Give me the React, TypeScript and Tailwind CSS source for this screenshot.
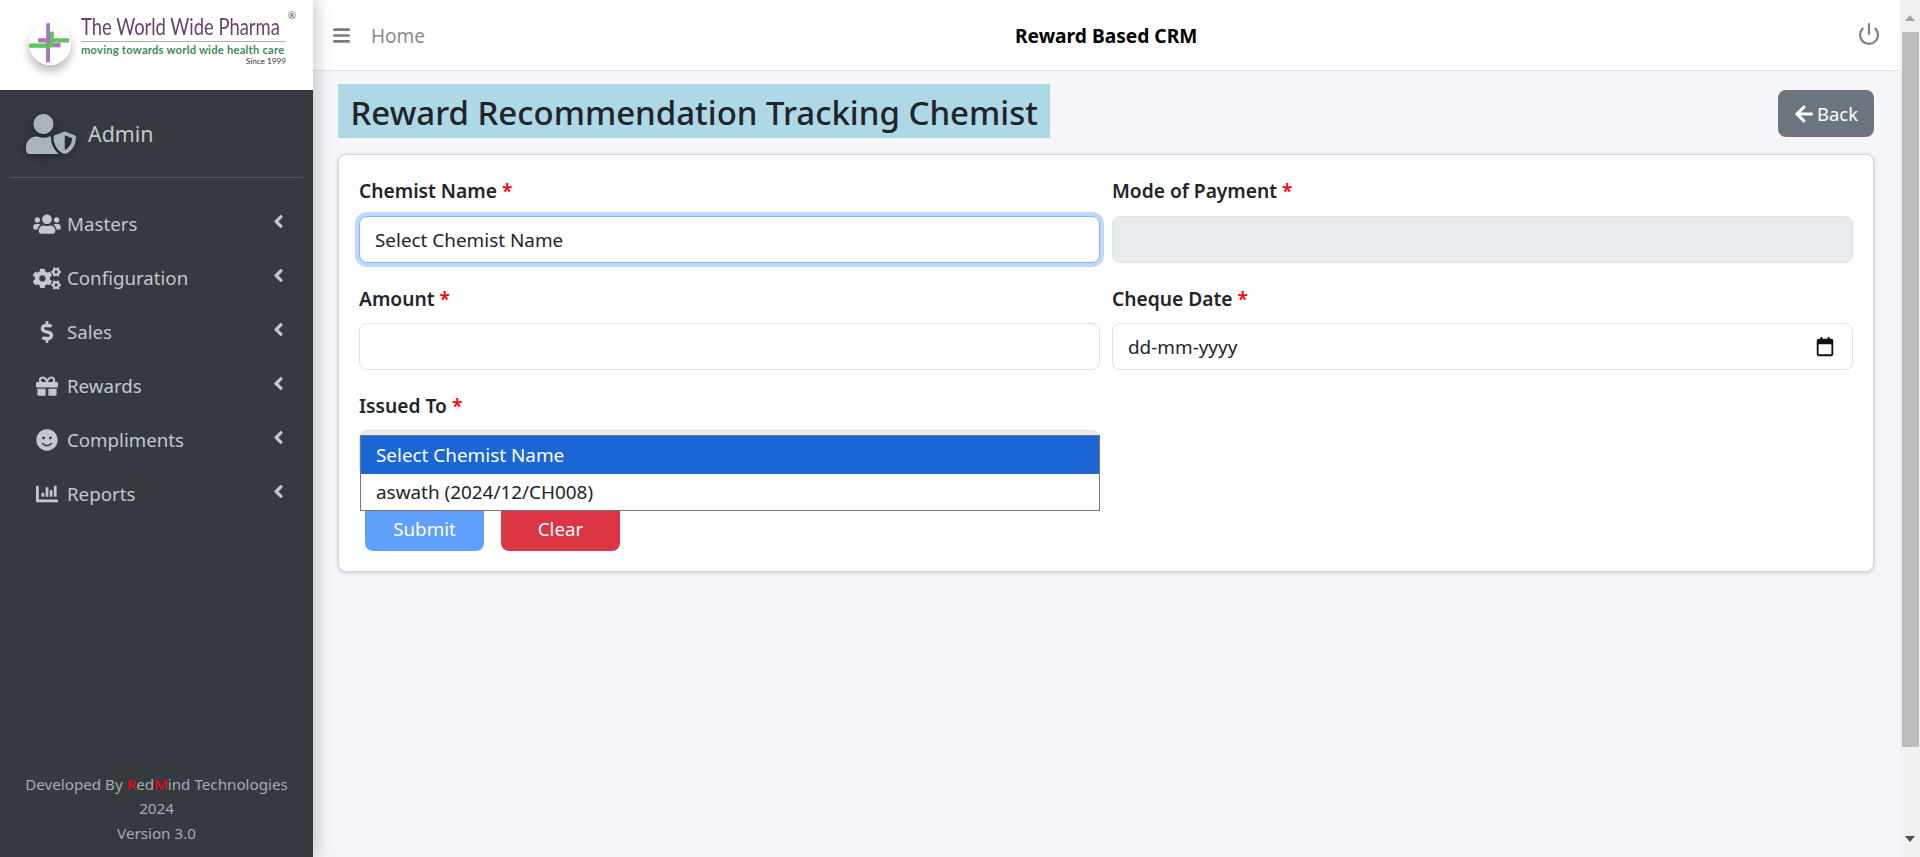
import { FaUsers, FaCogs, FaDollarSign, FaGift, FaSmile, FaChartBar, FaAngleLeft, FaUserShield, FaBars, FaArrowLeft } from "react-icons/fa";
import { Power } from "lucide-react";

const menu = [
  { label: "Masters", icon: <FaUsers className="w-[28px] h-[22px]" /> },
  { label: "Configuration", icon: <FaCogs className="w-[28px] h-[23px]" /> },
  { label: "Sales", icon: <FaDollarSign className="w-[22px] h-[22px]" /> },
  { label: "Rewards", icon: <FaGift className="w-[22px] h-[22px]" /> },
  { label: "Compliments", icon: <FaSmile className="w-[22px] h-[22px]" /> },
  { label: "Reports", icon: <FaChartBar className="w-[22px] h-[22px]" /> },
];

function Logo() {
  return (
    <div className="h-[91px] bg-white flex items-start border-b border-[#2f343a]">
      <svg viewBox="0 0 44 44" className="w-[42px] h-[42px] ml-[29px] mt-[23px] rounded-full shadow-[0_6px_10px_rgba(0,0,0,0.28)]">
        <circle cx="22" cy="22" r="22" fill="#fff" />
        <rect x="18" y="0" width="4" height="41" fill="#ab74b8" />
        <rect x="9.5" y="16" width="12" height="4.5" fill="#ab74b8" />
        <rect x="22" y="21" width="11" height="4.5" fill="#ab74b8" />
        <rect x="22" y="9" width="4" height="16" fill="#5fc35c" />
        <rect x="22" y="16" width="20" height="4.5" fill="#5fc35c" />
        <rect x="0" y="21.5" width="20" height="4.5" fill="#5fc35c" />
        <rect x="18" y="21.5" width="4" height="5" fill="#5fc35c" />
        <rect x="18" y="26" width="4" height="15" fill="#ab74b8" />
      </svg>
      <div className="ml-[10px] mt-[13px] w-[205px]">
        <div className="relative text-[18.4px] leading-[26px] text-[#6a3f70] font-['Lato',sans-serif] whitespace-nowrap">
          <span className="inline-block scale-y-[1.25]">The World Wide Pharma</span>
          <span className="absolute right-[-10px] top-[-5px] text-[10px] leading-[14px] text-[#555]">®</span>
        </div>
        <div className="border-t border-[#a4bda9] mt-[2px]" />
        <div className="text-[11.2px] leading-[15px] font-bold text-[#3f8a5b] font-['Lato',sans-serif] tracking-[0.02em] whitespace-nowrap">
          moving towards world wide health care
        </div>
        <div className="text-[8.2px] leading-[9px] text-right text-[#333] font-['Lato',sans-serif]">Since 1999</div>
      </div>
    </div>
  );
}

function Sidebar() {
  return (
    <aside className="w-[313px] shrink-0 bg-[#343a40] flex flex-col relative z-10 shadow-[4px_0_16px_rgba(0,0,0,0.2)]">
      <Logo />
      <div className="h-[87px] mx-[10px] border-b border-[#4f5962] flex items-center pl-[16px]">
        <FaUserShield className="w-[50px] h-[40px] text-[#a9b3bb] drop-shadow-[0_2px_4px_rgba(0,0,0,0.4)]" />
        <span className="ml-[12px] text-[21.4px] text-[#c2c7d0]">Admin</span>
      </div>
      <nav className="pt-[19px]">
        {menu.map((item) => (
          <div key={item.label} className="h-[54px] flex items-center text-[#c2c7d0]">
            <span className="w-[28px] ml-[33px] flex justify-center shrink-0">{item.icon}</span>
            <span className="ml-[6px] text-[18.7px]">{item.label}</span>
            <FaAngleLeft className="ml-auto mr-[24px] w-[21px] h-[21px] -translate-y-[3px]" />
          </div>
        ))}
      </nav>
      <div className="mt-auto pb-[12px] text-center text-[15.2px] leading-[24.4px] text-[#a3abb3]">
        <div>
          Developed By <span className="text-[#ff0000]">R</span>ed<span className="text-[#ff0000]">M</span>ind Technologies
        </div>
        <div>2024</div>
        <div>Version 3.0</div>
      </div>
    </aside>
  );
}

function Label({ text }: { text: string }) {
  return (
    <label className="block text-[19.2px] leading-[24px] font-semibold text-[#212529] mb-[12px]">
      {text} <span className="text-[#ff0000]">*</span>
    </label>
  );
}

function Form() {
  return (
    <div className="bg-white ml-[25px] mr-[26px] mt-[16px] rounded-lg border border-[#d3d6da] shadow-[0_1px_4px_rgba(0,0,0,0.18)] h-[418px] px-[20px] pt-[24px] relative">
      <div className="grid grid-cols-2 gap-x-[12px]">
        <div className="h-[108px]">
          <Label text="Chemist Name" />
          <div className="h-[47px] mt-[13px] pt-[2px] rounded-lg bg-white border border-[#86b7fe] shadow-[0_0_0_4px_#c0d8fd] flex items-center px-[15px] text-[18.9px] text-[#212529]">
            Select Chemist Name
          </div>
        </div>
        <div className="h-[108px]">
          <Label text="Mode of Payment" />
          <input disabled className="block w-full h-[47px] mt-[13px] rounded-lg bg-[#e9ecef] border border-[#dee2e6]" />
        </div>
        <div className="h-[107px]">
          <Label text="Amount" />
          <input className="block w-full h-[47px] rounded-lg bg-white border border-[#dee2e6] px-[15px]" />
        </div>
        <div className="h-[107px]">
          <Label text="Cheque Date" />
          <div className="h-[47px] rounded-lg bg-white border border-[#dee2e6] flex items-center justify-between pl-[15px] pr-[16px] text-[18.9px] text-[#212529]">
            <span className="pt-[2px]">dd-mm-yyyy</span>
            <svg viewBox="0 0 24 24" className="w-[22px] h-[22px]" fill="#111">
              <path d="M7 1h2.2v2h5.6V1H17v2h2a2 2 0 0 1 2 2v15a2 2 0 0 1-2 2H5a2 2 0 0 1-2-2V5a2 2 0 0 1 2-2h2V1Zm-2 8v11h14V9H5Z" />
            </svg>
          </div>
        </div>
        <div className="col-start-1">
          <Label text="Issued To" />
          <div className="h-[46px] rounded-lg bg-[#e9ecef] border border-[#dee2e6]" />
        </div>
      </div>

      <div className="flex gap-[17px] ml-[6px] mt-[28px]">
        <button className="w-[119px] h-[47px] pt-[4px] rounded-lg bg-[#60a0ff] text-white text-[18.8px]">Submit</button>
        <button className="w-[119px] h-[47px] pt-[4px] rounded-lg bg-[#dc3545] text-white text-[18.8px]">Clear</button>
      </div>

      {/* open select list */}
      <div className="absolute left-[21px] top-[280px] w-[740px] border border-[#767676] bg-white text-[18.9px] text-[#212529]">
        <div className="h-[38px] bg-[#1a66d4] text-white flex items-center px-[15px]">Select Chemist Name</div>
        <div className="h-[36px] flex items-center px-[15px]">aswath (2024/12/CH008)</div>
      </div>
    </div>
  );
}

function Scrollbar() {
  return (
    <div className="w-[20px] shrink-0 bg-[#f1f1f1] flex flex-col items-center">
      <svg viewBox="0 0 10 6" className="w-[10px] h-[6px] mt-[15px] mb-[11px]" fill="#a3a3a3">
        <path d="M5 0 10 6H0Z" />
      </svg>
      <div className="w-[17px] h-[715px] bg-[#bcbcbc]" />
      <svg viewBox="0 0 10 6" className="w-[10px] h-[6px] mt-auto mb-[15px]" fill="#505050">
        <path d="M0 0H10L5 6Z" />
      </svg>
    </div>
  );
}

export default function App() {
  return (
    <div className="h-[857px] flex overflow-hidden bg-[#f4f6f9] font-['Noto_Sans',sans-serif]">
      <Sidebar />
      <main className="flex-1 min-w-0">
        <header className="h-[71px] bg-white border-b border-[#dee2e6] flex items-center relative pl-[20px] pr-[19px]">
          <FaBars className="w-[17px] h-[19px] text-[#7a7a7a]" />
          <span className="ml-[21px] pt-[2px] text-[19px] text-[#8a8a8a]">Home</span>
          <span className="absolute left-[702px] pt-[2px] text-[19.2px] font-bold text-black">Reward Based CRM</span>
          <Power className="ml-auto w-[24px] h-[24px] text-[#808080] -translate-y-[1px]" strokeWidth={2.2} />
        </header>
        <div className="flex items-end justify-between ml-[25px] mr-[26px] mt-[13px]">
          <h1 className="bg-[#add8e6] h-[54px] flex items-center pt-[3px] px-[12.5px] text-[33px] font-medium text-[#212529]">
            Reward Recommendation Tracking Chemist
          </h1>
          <button className="w-[96px] h-[47px] mb-[1px] rounded-lg bg-[#6c757d] text-white text-[18.4px] flex items-center justify-center gap-[3px]">
            <FaArrowLeft className="w-[20px] h-[20px]" /> Back
          </button>
        </div>
        <Form />
      </main>
      <Scrollbar />
    </div>
  );
}
